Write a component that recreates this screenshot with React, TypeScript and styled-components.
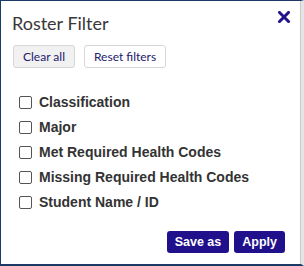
import React from "react";
import styled, { createGlobalStyle } from "styled-components";

const Global = createGlobalStyle`
  html, body { margin: 0; padding: 0; background: #ffffff; }
  * { box-sizing: border-box; }
`;

const filters = [
  "Classification",
  "Major",
  "Met Required Health Codes",
  "Missing Required Health Codes",
  "Student Name / ID",
];

const App = () => {
  return (
    <>
      <Global />
      <Panel>
        <Header>
          <Title>Roster Filter</Title>
          <Close aria-label="close">
            <svg width="12" height="12" viewBox="0 0 12 12">
              <path d="M1.5 1.5 L10.5 10.5 M10.5 1.5 L1.5 10.5" stroke="#22128c" strokeWidth="3" strokeLinecap="square" />
            </svg>
          </Close>
        </Header>
        <Tools>
          <ToolButton $grey>Clear all</ToolButton>
          <ToolButton>Reset filters</ToolButton>
        </Tools>
        <List>
          {filters.map((f) => (
            <Row key={f}>
              <Box />
              <Label>{f}</Label>
            </Row>
          ))}
        </List>
        <Footer>
          <Primary>Save as</Primary>
          <Primary>Apply</Primary>
        </Footer>
      </Panel>
    </>
  );
};

export default App;

const Panel = styled.div`
  width: 304px;
  height: 266px;
  border-top: 1px solid #1c3a66;
  border-left: 1px solid #1c3a66;
  border-bottom: 2px solid #1c3a66;
  border-right: 3px solid #e4e4e4;
  box-shadow: inset -1px 0 0 #c9c9c9;
  display: flex;
  flex-direction: column;
  padding: 0 0 0 11px;
`;

const Header = styled.div`
  display: flex;
  justify-content: space-between;
  align-items: flex-start;
  height: 44px;
  padding-top: 10px;
`;

const Title = styled.div`
  font-family: Lato, "Open Sans", sans-serif;
  font-size: 18px;
  color: #383838;
  line-height: 24px;
`;

const Close = styled.div`
  width: 12px;
  height: 12px;
  margin: 0 11px 0 0;
  display: flex;
`;

const Tools = styled.div`
  display: flex;
  gap: 9px;
  padding-left: 1px;
`;

const ToolButton = styled.div<{ $grey?: boolean }>`
  height: 23px;
  padding: 0 9px;
  display: flex;
  align-items: center;
  font-family: Lato, "Open Sans", sans-serif;
  font-size: 12px;
  color: #24206e;
  background: ${(p) => (p.$grey ? "#f1f1f1" : "#ffffff")};
  border: 1px solid #d6d6d6;
  border-radius: 3px;
`;

const List = styled.div`
  display: flex;
  flex-direction: column;
  gap: 9px;
  padding: 26px 0 0 7px;
`;

const Row = styled.div`
  display: flex;
  align-items: center;
  height: 16px;
  gap: 7px;
`;

const Box = styled.span`
  width: 13px;
  height: 13px;
  border: 1px solid #555;
  border-radius: 2px;
  background: #fff;
`;

const Label = styled.span`
  font-family: "Liberation Sans", Arial, sans-serif;
  font-weight: bold;
  font-size: 14px;
  color: #333333;
`;

const Footer = styled.div`
  display: flex;
  justify-content: flex-end;
  gap: 5px;
  margin-top: auto;
  margin-bottom: 11px;
  padding-right: 16px;
`;

const Primary = styled.div`
  height: 22px;
  padding: 0 8px;
  display: flex;
  align-items: center;
  background: #20108c;
  color: #ffffff;
  font-family: "Liberation Sans", Arial, sans-serif;
  font-weight: bold;
  font-size: 12.5px;
  border-radius: 3px;
`;
